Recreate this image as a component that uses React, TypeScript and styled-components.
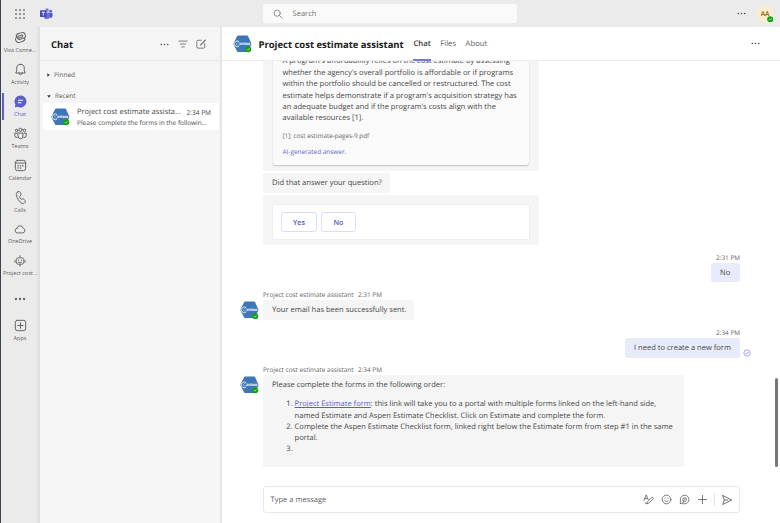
import React from "react";
import styled, { createGlobalStyle, css } from "styled-components";

const GlobalStyle = createGlobalStyle`
  * { box-sizing: border-box; }
  body { margin: 0; background: #fff; overflow: hidden; }
  button { font: inherit; padding: 0; }
`;

const Shell = styled.div`
  width: 780px;
  height: 523px;
  border-left: 1px solid #3b4252;
  display: flex;
  flex-direction: column;
  background: #fff;
  color: #464646;
  font-family: "Open Sans", "Noto Sans", sans-serif;
  font-size: 7.55px;
  line-height: 11.4px;
  text-rendering: geometricPrecision;
`;

/* Top bar */
const TopBar = styled.header`
  flex: none;
  height: 27px;
  background: #ebebeb;
  display: flex;
  align-items: center;
  padding: 0 7px 0 13px;
`;
const Brand = styled.div`
  width: 249px;
  display: flex;
  align-items: center;
  gap: 14px;
`;
const SearchBox = styled.div`
  width: 254px;
  height: 19px;
  border-radius: 2px;
  background: #fafafa;
  display: flex;
  align-items: center;
  gap: 9.5px;
  padding-left: 10px;
  color: #707070;
`;
const FieldText = styled.span`
  padding-top: 2px;
`;
const Spacer = styled.div`
  flex: 1;
`;
const UserAvatar = styled.div`
  position: relative;
  width: 16px;
  height: 16px;
  margin-left: 10px;
  border-radius: 50%;
  background: #fbeccb;
  color: #835b00;
  font-size: 6.6px;
  font-weight: 600;
  line-height: 16px;
  text-align: center;
`;

/* Left rail */
const Body = styled.div`
  flex: 1;
  min-height: 0;
  display: flex;
`;
const Rail = styled.nav`
  flex: none;
  width: 39px;
  padding-top: 1px;
  background: linear-gradient(to right, #ebebeb 0 35px, #dcdcdc 39px);
`;
const RailItem = styled.div<{ $active?: boolean }>`
  position: relative;
  height: 32px;
  padding: 3px 1px 0 0;
  display: flex;
  flex-direction: column;
  align-items: center;
  color: ${(p) => (p.$active ? "#5b5fc7" : "#616161")};
  ${(p) =>
    p.$active &&
    css`
      &::before {
        content: "";
        position: absolute;
        left: 1px;
        top: 1px;
        width: 1.5px;
        height: 27px;
        background: #5b5fc7;
      }
    `}
`;
const RailLabel = styled.span`
  margin-top: 1.5px;
  font-size: 5.48px;
  line-height: 8px;
  white-space: nowrap;
`;

/* Chat list */
const ListPane = styled.aside`
  flex: none;
  width: 182px;
  background: #f5f5f5;
  border-right: 2px solid #e6e6e6;
`;
const ListHeader = styled.div`
  height: 34px;
  padding: 1px 14px 0 11px;
  border-bottom: 1px solid #e6e6e6;
  display: flex;
  align-items: center;
  gap: 8px;
  color: #555;
`;
const Title = styled.h1`
  margin: 0;
  color: #202020;
  font-size: 9.46px;
  line-height: 13px;
  font-weight: 700;
  white-space: nowrap;
`;
const Section = styled.div`
  height: 10px;
  margin-bottom: 11px;
  padding-left: 7px;
  display: flex;
  align-items: center;
  gap: 4px;
  font-size: 6.45px;
  color: #555;
`;
const Sections = styled.div`
  padding-top: 9px;
  height: 42px;
`;
const ChatRow = styled.div`
  height: 27px;
  margin: 0 1px 0 3px;
  padding: 0 8px;
  border-radius: 2px;
  background: #fff;
  display: flex;
  align-items: center;
  gap: 7px;
`;
const ChatText = styled.div`
  flex: 1;
  min-width: 0;
  padding-top: 1px;
`;
const ChatLine = styled.div<{ $small?: boolean }>`
  display: flex;
  justify-content: space-between;
  white-space: nowrap;
  font-size: ${(p) => (p.$small ? "6.48px" : "7.46px")};
  line-height: ${(p) => (p.$small ? "10px" : "11px")};
`;
const ChatTime = styled.span`
  font-size: 6.55px;
`;

/* Avatars */
const AvatarBox = styled.span`
  position: relative;
  flex: none;
  display: block;
  width: 19px;
  height: 18px;
`;
const Badge = styled.svg<{ $x: number; $y: number }>`
  position: absolute;
  left: ${(p) => p.$x}px;
  top: ${(p) => p.$y}px;
  width: 6.4px;
  height: 6.4px;
`;

/* Conversation */
const Main = styled.main`
  flex: 1;
  min-width: 0;
  display: flex;
  flex-direction: column;
`;
const MainHeader = styled.div`
  position: relative;
  flex: none;
  height: 34px;
  padding: 0 19px 0 11px;
  border-bottom: 1px solid #ececec;
  display: flex;
  align-items: center;
`;
const HeaderTitle = styled(Title)`
  margin: 0 9.8px 0 6.5px;
  padding-top: 1px;
`;
const Tab = styled.span<{ $active?: boolean }>`
  height: 34px;
  margin-right: 9.5px;
  line-height: 35px;
  font-size: 7.7px;
  color: ${(p) => (p.$active ? "#333" : "#616161")};
  font-weight: ${(p) => (p.$active ? 600 : 400)};
  box-shadow: ${(p) => (p.$active ? "inset 0 -2px #7579d6" : "none")};
`;
const Thread = styled.div`
  flex: none;
  height: 406px;
  display: flex;
`;
const Messages = styled.div`
  flex: 1;
  padding-left: 18px;
  overflow: hidden;
`;
const ScrollTrack = styled.div`
  width: 5px;
  display: flex;
  align-items: flex-end;
`;
const ScrollThumb = styled.div`
  width: 3px;
  height: 89px;
  border-radius: 2px;
  background: #777;
`;
const Bubble = styled.div<{ $w: number; $h: number; $mine?: boolean; $gap?: number }>`
  width: ${(p) => p.$w}px;
  height: ${(p) => p.$h}px;
  margin-bottom: ${(p) => p.$gap ?? 0}px;
  border-radius: 2.5px;
  padding: 5px 9px 3px;
  white-space: nowrap;
  background: ${(p) => (p.$mine ? "#e8ebfa" : "#f5f5f5")};
`;
const Indented = styled.div`
  padding-left: 23px;
`;
const CardBubble = styled(Bubble)`
  padding: 0 10px;
  border-radius: 0 0 3px 3px;
`;
const AnswerCard = styled.div`
  display: flow-root;
  height: 104px;
  padding: 0 9.5px;
  border-radius: 0 0 3px 3px;
  background: #fafafa;
  box-shadow: 0 1px 1.5px rgba(0, 0, 0, 0.22);
`;
const Paragraph = styled.p`
  margin: -4.6px 0 5px;
`;
const Note = styled.div<{ $link?: boolean }>`
  margin-top: ${(p) => (p.$link ? 5 : 0)}px;
  font-size: ${(p) => (p.$link ? 6.43 : 6.3)}px;
  line-height: 11px;
  color: ${(p) => (p.$link ? "#5b5fc7" : "#616161")};
`;
const ActionBubble = styled(Bubble)`
  padding: 9px 9px 5px;
`;
const ActionCard = styled.div`
  height: 36px;
  border: 1px solid #eee;
  border-radius: 1px;
  background: #fff;
  display: flex;
  gap: 4px;
  padding: 7px 8px;
`;
const ActionButton = styled.button<{ $w: number }>`
  width: ${(p) => p.$w}px;
  height: 20px;
  border: 1px solid #dcdcf8;
  border-radius: 2.5px;
  background: #fff;
  color: #5054bd;
  font-size: 7.2px;
  font-weight: 600;
  line-height: 18px;
`;
const Mine = styled.div<{ $top?: number }>`
  margin-top: ${(p) => p.$top ?? 0}px;
  height: 27px;
  padding-right: 35px;
  display: flex;
  flex-direction: column;
  align-items: flex-end;
`;
const Sent = styled.div`
  position: relative;
`;
const SentMark = styled.svg`
  position: absolute;
  right: -11px;
  bottom: 1px;
  width: 8px;
  height: 8px;
`;
const Meta = styled.div`
  height: 11px;
  font-size: 6.42px;
  line-height: 11px;
  color: #616161;
  display: flex;
  gap: 4.5px;
  white-space: nowrap;
`;
const Theirs = styled.div`
  margin-top: 10px;
  display: flex;
  gap: 4px;
`;
const BotAvatarSlot = styled.div`
  padding-top: 12px;
`;
const Steps = styled.ol`
  margin: 8.5px 0 0;
  padding: 0 0 0 22.6px;
  line-height: 11.2px;
`;
const Step = styled.li`
  min-height: 11.4px;
  padding-left: 0;
`;
const Link = styled.a`
  color: #5b5fc7;
  text-decoration: underline;
  text-decoration-thickness: 0.6px;
`;
const Composer = styled.div`
  width: 477px;
  height: 27px;
  margin: 19px 0 0 41px;
  padding: 0 6.5px;
  border: 1px solid #e8e8e8;
  border-radius: 3px;
  display: flex;
  align-items: center;
  color: #616161;
`;
const Tools = styled.div`
  display: flex;
  align-items: center;
  gap: 7px;
`;
const Divider = styled.span`
  width: 1px;
  height: 13px;
  margin: 0 -1px;
  background: #e4e4e4;
`;

const Glyph = styled.svg.attrs({ viewBox: "0 0 24 24" })<{ $s?: number }>`
  flex: none;
  display: block;
  width: ${(p) => p.$s ?? 12}px;
  height: ${(p) => p.$s ?? 12}px;
  fill: none;
  stroke: currentColor;
  stroke-width: 1.8;
  stroke-linecap: round;
  stroke-linejoin: round;
`;

const Dots = ({ s = 12, r = 1.9 }: { s?: number; r?: number }) => (
  <Glyph $s={s}>
    <g fill="currentColor" stroke="none">
      <circle cx="5" cy="12" r={r} />
      <circle cx="12" cy="12" r={r} />
      <circle cx="19" cy="12" r={r} />
    </g>
  </Glyph>
);

const Check = ({ x, y }: { x: number; y: number }) => (
  <Badge viewBox="0 0 12 12" $x={x} $y={y}>
    <circle cx="6" cy="6" r="5.7" fill="#13a10e" />
    <path d="M3.6 6.2l1.7 1.7 3.2-3.4" fill="none" stroke="#fff" strokeWidth="1.2" />
  </Badge>
);

const LogoText = styled.text`
  font: 700 4.1px "Open Sans", sans-serif;
  fill: #fff;
`;

const BotAvatar = () => (
  <AvatarBox>
    <svg width="19" height="18" viewBox="0 0 19 18">
      <path d="M5 .6h9.200q.5 0 .8.5l3.300 7.100q.3.600 0 1.200L15 16.400q-.3.500-.8.500H5q-.5 0-.8-.5L.500 9.400q-.3-.600 0-1.200L4.200 1.100q.3-.5.8-.5z" fill="#3f76b8" />
      <path d="M6.300 6.800A2.900 2.900 0 1 0 6.300 10.900" fill="none" stroke="#fff" strokeWidth=".8" />
      <path d="M5.800 7.800A1.400 1.400 0 1 0 5.800 9.900" fill="none" stroke="#cfe0f2" strokeWidth=".5" />
      <LogoText x="6.300" y="10.200" textLength="11" lengthAdjust="spacingAndGlyphs">ontoso</LogoText>
    </svg>
    <Check x={12.4} y={11.8} />
  </AvatarBox>
);

const rail: { label: string; active?: boolean; icon: React.ReactNode }[] = [
  {
    label: "Viva Conne...",
    icon: (
      <Glyph $s={13}>
        <g transform="rotate(-18 12 12)">
          <path d="M10 4h6.500a5.500 5.500 0 0 1 0 11H10a3.300 3.300 0 0 1 0-6.600h6" />
          <path d="M14 20H7.500a5.500 5.500 0 0 1 0-11M14 20a5 5 0 0 0 5-5M10 4a5 5 0 0 0-5 5M8 12h7.500a2 2 0 0 0 .5-3.600" />
        </g>
      </Glyph>
    ),
  },
  {
    label: "Activity",
    icon: (
      <Glyph $s={13}>
        <path d="M12 2.500a7 7 0 0 0-7 7v4.800L3.300 18.500h17.400L19 14.300V9.500a7 7 0 0 0-7-7zM9 18.500a3 3 0 0 0 6 0" />
      </Glyph>
    ),
  },
  {
    label: "Chat",
    active: true,
    icon: (
      <Glyph $s={13}>
        <path d="M12 1a11 11 0 1 1-5.200 20.700L1.500 23l1.100-5.400A11 11 0 0 1 12 1z" fill="#5b5fc7" stroke="none" />
        <path d="M8 9.700h8M8 14.200h5" stroke="#fff" strokeWidth="2" />
      </Glyph>
    ),
  },
  {
    label: "Teams",
    icon: (
      <Glyph $s={13}>
        <circle cx="12" cy="5.200" r="3" />
        <circle cx="4.800" cy="6.200" r="2.300" />
        <circle cx="19.200" cy="6.200" r="2.300" />
        <path d="M7.500 11.200h9v6a4.500 4.500 0 0 1-9 0zM5.200 11.200H1.500v4.500a3.800 3.800 0 0 0 4.500 3.700M18.800 11.200h3.700v4.500a3.800 3.800 0 0 1-4.500 3.700" />
      </Glyph>
    ),
  },
  {
    label: "Calendar",
    icon: (
      <Glyph $s={13}>
        <rect x="2.500" y="2.500" width="19" height="19" rx="4" />
        <path d="M2.500 7.500h19" />
        <g fill="currentColor" stroke="none">
          <circle cx="7.500" cy="12.300" r="1.400" />
          <circle cx="12" cy="12.300" r="1.400" />
          <circle cx="16.500" cy="12.300" r="1.400" />
          <circle cx="7.500" cy="16.800" r="1.400" />
          <circle cx="12" cy="16.800" r="1.400" />
        </g>
      </Glyph>
    ),
  },
  {
    label: "Calls",
    icon: (
      <Glyph $s={13}>
        <path d="M6.800 1.800l2-.6c1.200-.3 2.300.2 2.800 1.300l1.300 3c.4 1 .2 2-.6 2.800l-2 1.900c.2 1.700 1.600 4.200 3.200 5.200l2.600-.8c1-.3 2.100.1 2.700 1l1.800 2.600c.7 1 .5 2.200-.3 3l-1 1c-1.100 1-2.700 1.300-4.100.7C9.500 20.300 5.500 14 4.300 6.300c-.2-1.900.7-3.900 2.500-4.500z" />
      </Glyph>
    ),
  },
  {
    label: "OneDrive",
    icon: (
      <Glyph>
        <path d="M6 10.200a6.200 6.200 0 0 1 12 0 4.900 4.900 0 0 1-.3 9.600H6.300a4.900 4.900 0 0 1-.3-9.600z" />
      </Glyph>
    ),
  },
  {
    label: "Project cost...",
    icon: (
      <Glyph>
        <path d="M12 1.200v4M4.500 9.500a4 4 0 0 1 4-4h7a4 4 0 0 1 4 4v5a4 4 0 0 1-4 4h-7a4 4 0 0 1-4-4zM2 10.500v4M22 10.500v4M12 18.500v4M8.500 14.500c2 1.300 5 1.300 7 0M9 10v1M15 10v1" />
      </Glyph>
    ),
  },
];

const TeamsLogo = () => (
  <svg width="12.500" height="11.500" viewBox="0 0 24 22">
    <circle cx="20.500" cy="6" r="2.500" fill="#5059c9" />
    <path d="M16 9h7.200c.5 0 .8.400.8.800v5.400a3.700 3.700 0 0 1-3.700 3.700H17z" fill="#5059c9" />
    <circle cx="13.500" cy="4" r="3.600" fill="#7b83eb" />
    <path d="M8 9h10.200c.5 0 .8.400.8.900v6a6 6 0 0 1-11 3.200z" fill="#6a71dc" />
    <rect x="0" y="4.500" width="12.500" height="12.500" rx="1.200" fill="#434bb4" />
    <path d="M3.200 8h6.200M6.300 8v6.400" stroke="#fff" strokeWidth="1.700" />
  </svg>
);

export default function App() {
  return (
    <Shell>
      <GlobalStyle />
      <TopBar>
        <Brand>
          <Glyph>
            <g fill="currentColor" stroke="none">
              {[4, 12, 20].map((y) => [4, 12, 20].map((x) => <circle key={`${x}-${y}`} cx={x} cy={y} r="1.700" />))}
            </g>
          </Glyph>
          <TeamsLogo />
        </Brand>
        <SearchBox>
          <Glyph $s={10}>
            <circle cx="10" cy="10" r="7.500" />
            <path d="M15.500 15.500L22 22" />
          </Glyph>
          <FieldText>Search</FieldText>
        </SearchBox>
        <Spacer />
        <Dots s={11} r={1.7} />
        <UserAvatar>
          AA
          <Check x={9.8} y={10} />
        </UserAvatar>
      </TopBar>

      <Body>
        <Rail>
          {rail.map((item) => (
            <RailItem key={item.label} $active={item.active}>
              {item.icon}
              <RailLabel>{item.label}</RailLabel>
            </RailItem>
          ))}
          <RailItem>
            <Spacer />
            <Dots s={14} r={2} />
            <Spacer />
            <Spacer />
          </RailItem>
          <RailItem>
            <Glyph $s={13}>
              <rect x="2.500" y="2.500" width="19" height="19" rx="3.500" />
              <path d="M12 7v10M7 12h10" />
            </Glyph>
            <RailLabel>Apps</RailLabel>
          </RailItem>
        </Rail>

        <ListPane>
          <ListHeader>
            <Title>Chat</Title>
            <Spacer />
            <Dots s={11} r={1.7} />
            <Glyph $s={10}>
              <path d="M2 5h20M5.500 12h13M9 19h6" />
            </Glyph>
            <Glyph $s={10}>
              <path d="M13 3H5a3 3 0 0 0-3 3v13a3 3 0 0 0 3 3h13a3 3 0 0 0 3-3v-8M22 2L11.500 12.500l-1 2.500 2.500-1L23 3.500" />
            </Glyph>
          </ListHeader>
          <Sections>
            <Section>
              <svg width="3" height="4" viewBox="0 0 3 4">
                <path d="M.3.2L2.800 2 .3 3.800z" fill="#333" />
              </svg>
              Pinned
            </Section>
            <Section>
              <svg width="4" height="3" viewBox="0 0 4 3">
                <path d="M.2.3h3.600L2 2.700z" fill="#333" />
              </svg>
              Recent
            </Section>
          </Sections>
          <ChatRow>
            <BotAvatar />
            <ChatText>
              <ChatLine>
                <span>Project cost estimate assista...</span>
                <ChatTime>2:34 PM</ChatTime>
              </ChatLine>
              <ChatLine $small>Please complete the forms in the followin...</ChatLine>
            </ChatText>
          </ChatRow>
        </ListPane>

        <Main>
          <MainHeader>
            <BotAvatar />
            <HeaderTitle>Project cost estimate assistant</HeaderTitle>
            <Tab $active>Chat</Tab>
            <Tab>Files</Tab>
            <Tab>About</Tab>
            <Spacer />
            <Dots s={11} r={1.7} />
          </MainHeader>

          <Thread>
            <Messages>
              <Indented>
                <CardBubble $w={275.5} $h={110} $gap={1.5}>
                  <AnswerCard>
                    <Paragraph>
                      A program's affordability relies on the cost estimate by assessing
                      <br />
                      whether the agency's overall portfolio is affordable or if programs
                      <br />
                      within the portfolio should be cancelled or restructured. The cost
                      <br />
                      estimate helps demonstrate if a program's acquisition strategy has
                      <br />
                      an adequate budget and if the program's costs align with the
                      <br />
                      available resources [1].
                    </Paragraph>
                    <Note>[1]: cost estimate-pages-9.pdf</Note>
                    <Note $link>AI-generated answer.</Note>
                  </AnswerCard>
                </CardBubble>
                <Bubble $w={127} $h={20} $gap={2.5}>Did that answer your question?</Bubble>
                <ActionBubble $w={275.5} $h={50} $gap={7}>
                  <ActionCard>
                    <ActionButton $w={36}>Yes</ActionButton>
                    <ActionButton $w={35}>No</ActionButton>
                  </ActionCard>
                </ActionBubble>
              </Indented>

              <Mine>
                <Meta>2:31 PM</Meta>
                <Bubble $mine $w={29} $h={20}>No</Bubble>
              </Mine>

              <Theirs>
                <BotAvatarSlot><BotAvatar /></BotAvatarSlot>
                <div>
                  <Meta><span>Project cost estimate assistant</span><span>2:31 PM</span></Meta>
                  <Bubble $w={151} $h={20}>Your email has been successfully sent.</Bubble>
                </div>
              </Theirs>

              <Mine $top={6.5}>
                <Meta>2:34 PM</Meta>
                <Sent>
                  <Bubble $mine $w={115} $h={20}>I need to create a new form</Bubble>
                  <SentMark viewBox="0 0 24 24">
                    <circle cx="12" cy="12" r="9.500" fill="none" stroke="#7b7fd8" strokeWidth="2" />
                    <path d="M7.500 12.500l3 3 6-6.500" fill="none" stroke="#5b5fc7" strokeWidth="2" />
                  </SentMark>
                </Sent>
              </Mine>

              <Theirs>
                <BotAvatarSlot><BotAvatar /></BotAvatarSlot>
                <div>
                  <Meta><span>Project cost estimate assistant</span><span>2:34 PM</span></Meta>
                  <Bubble $w={420.5} $h={92}>
                    Please complete the forms in the following order:
                    <Steps>
                      <Step>
                        <Link>Project Estimate form</Link>: this link will take you to a portal with multiple forms linked on the left-hand side,
                        <br />
                        named Estimate and Aspen Estimate Checklist. Click on Estimate and complete the form.
                      </Step>
                      <Step>
                        Complete the Aspen Estimate Checklist form, linked right below the Estimate form from step #1 in the same
                        <br />
                        portal.
                      </Step>
                      <Step />
                    </Steps>
                  </Bubble>
                </div>
              </Theirs>
            </Messages>
            <ScrollTrack>
              <ScrollThumb />
            </ScrollTrack>
          </Thread>

          <Composer>
            <FieldText>Type a message</FieldText>
            <Spacer />
            <Tools>
              <Glyph $s={11}>
                <path d="M2 14L7 2l4.500 10.500M3.500 10h6M9 20.500c0-3 1-4 3-6l6.500-6.500a2 2 0 0 1 3.500 3L15 18c-2 2-3 2.500-6 2.500zM9 20.500c-2 1.500-4 1-4-1" />
              </Glyph>
              <Glyph $s={11}>
                <circle cx="12" cy="12" r="9.500" />
                <path d="M8 14.500c2 2.500 6 2.500 8 0M8.800 9v.6M15.200 9v.6" />
              </Glyph>
              <Glyph $s={11}>
                <path d="M3 21V12a9.300 9.300 0 1 1 9.300 9.300H8M3 21c5 0 6.500-2 7-5.500M10 15.500c3 2 6.500-.5 6.500-3.500a4.200 4.200 0 0 0-8.300-.6c-.3 1.600.3 3.100 1.800 4.100zM12.500 10.500v2.500" />
              </Glyph>
              <Glyph $s={11}>
                <path d="M12 3v18M3 12h18" />
              </Glyph>
              <Divider />
              <Glyph>
                <path d="M3.500 3l18 9-18 9 3-9zM6.500 12H14" />
              </Glyph>
            </Tools>
          </Composer>
        </Main>
      </Body>
    </Shell>
  );
}
